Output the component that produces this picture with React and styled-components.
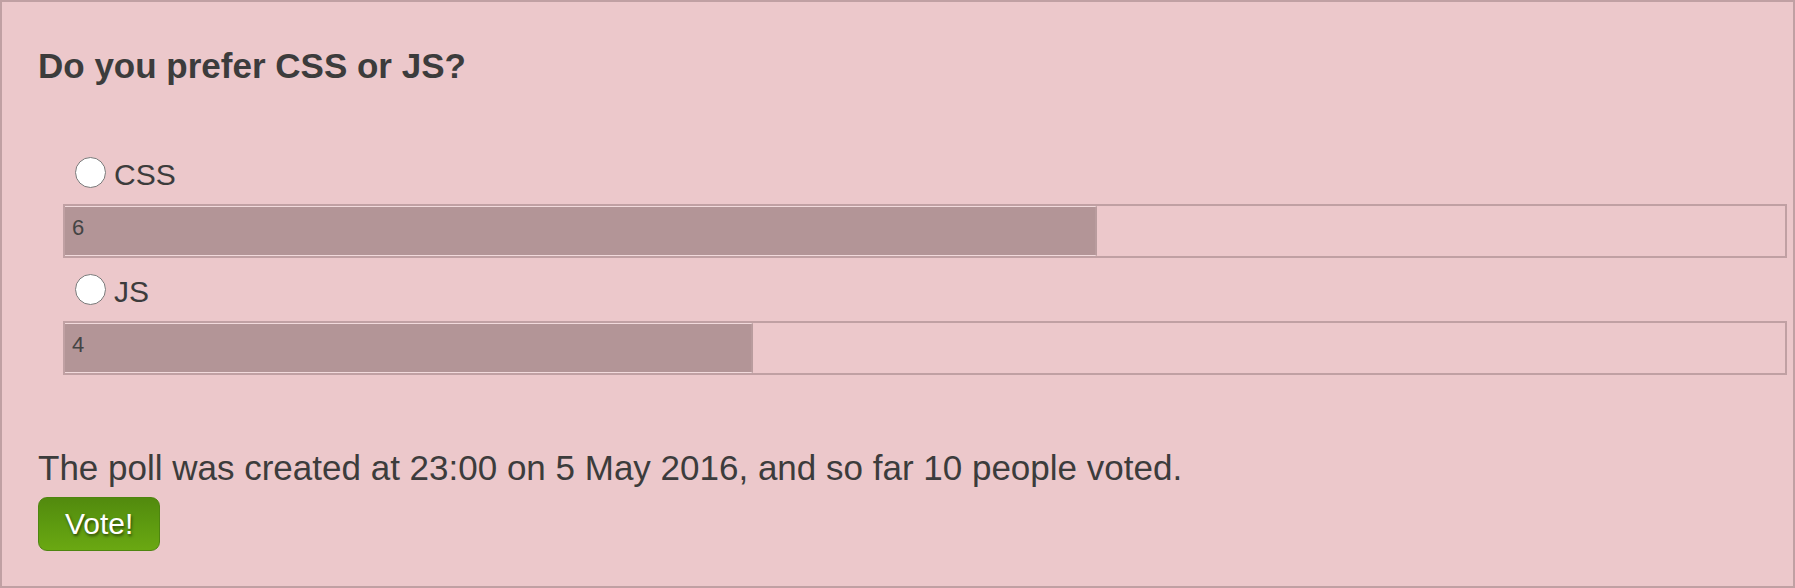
import * as React from "react";
import styled, { createGlobalStyle } from "styled-components";

const GlobalStyle = createGlobalStyle`
  html,
  body {
    margin: 0;
    padding: 0;
    background: #ecc8cb;
  }
  body {
    font-family: "Liberation Sans", Arial, sans-serif;
    color: #3c3c3c;
  }
`;

const Poll = styled.div`
  box-sizing: border-box;
  width: 100%;
  height: 100vh;
  border: 2px solid #c0a0a3;
  background: #ecc8cb;
  padding: 0 6px 0 36px;
  display: flex;
  flex-direction: column;
`;

const Question = styled.h2`
  margin: 44px 0 0;
  font-size: 35px;
  line-height: 40px;
  font-weight: bold;
`;

const Options = styled.ul`
  list-style: none;
  margin: 71px 0 0 25px;
  padding: 0;
`;

const Option = styled.li`
  display: flex;
  flex-direction: column;
  & + & {
    margin-top: 16px;
  }
`;

const Choice = styled.label`
  display: flex;
  align-items: flex-end;
  gap: 8px;
  padding-left: 12px;
  margin-bottom: 12px;
  font-size: 30px;
  line-height: 34px;
  cursor: pointer;
`;

const Radio = styled.input.attrs({ type: "radio" })`
  appearance: none;
  box-sizing: border-box;
  width: 31px;
  height: 31px;
  margin: 0 0 4px;
  border-radius: 50%;
  border: 1px solid #7a7a7a;
  background: #fff;
  flex: none;

  &:checked {
    background: radial-gradient(circle, #3c3c3c 0 7px, #fff 8px);
  }
`;

const Bar = styled.div`
  box-sizing: border-box;
  height: 54px;
  border: 2px solid #c0a0a3;
  display: flex;
`;

const Fill = styled.div`
  box-sizing: border-box;
  height: 100%;
  background: #b39597;
  border-top: 1px solid #f2dadc;
  border-bottom: 1px solid #f2dadc;
  border-right: 2px solid #b99c9e;
  padding: 8px 7px 0;
  font-size: 22px;
  line-height: 25px;
  color: #444;
`;

const Summary = styled.p`
  margin: 73px 0 0;
  font-size: 35px;
  line-height: 40px;
`;

const VoteButton = styled.button`
  align-self: flex-start;
  box-sizing: border-box;
  margin-top: 9px;
  height: 54px;
  padding: 0 26px;
  border: 1px solid #4e8510;
  border-radius: 9px;
  background: linear-gradient(to bottom, #528a0e 0%, #5d9a10 50%, #6aa812 100%);
  color: #fff;
  font-family: "Liberation Sans", Arial, sans-serif;
  font-size: 30px;
  line-height: 34px;
  text-shadow: 1px 2px 3px rgba(0, 0, 0, 0.55);
  cursor: pointer;
`;

const options = [
  { label: "CSS", votes: 6 },
  { label: "JS", votes: 4 },
];

export default function App() {
  const [selected, setSelected] = React.useState(null);
  const total = options.reduce((sum, o) => sum + o.votes, 0);

  return (
    <>
      <GlobalStyle />
      <Poll>
        <Question>Do you prefer CSS or JS?</Question>
        <Options>
          {options.map(option => (
            <Option key={option.label}>
              <Choice>
                <Radio
                  name="poll"
                  value={option.label}
                  checked={selected === option.label}
                  onChange={() => setSelected(option.label)}
                />
                {option.label}
              </Choice>
              <Bar>
                <Fill style={{ width: `${(option.votes / total) * 100}%` }}>
                  {option.votes}
                </Fill>
              </Bar>
            </Option>
          ))}
        </Options>
        <Summary>
          The poll was created at 23:00 on 5 May 2016, and so far {total} people
          voted.
        </Summary>
        <VoteButton type="button">Vote!</VoteButton>
      </Poll>
    </>
  );
}
